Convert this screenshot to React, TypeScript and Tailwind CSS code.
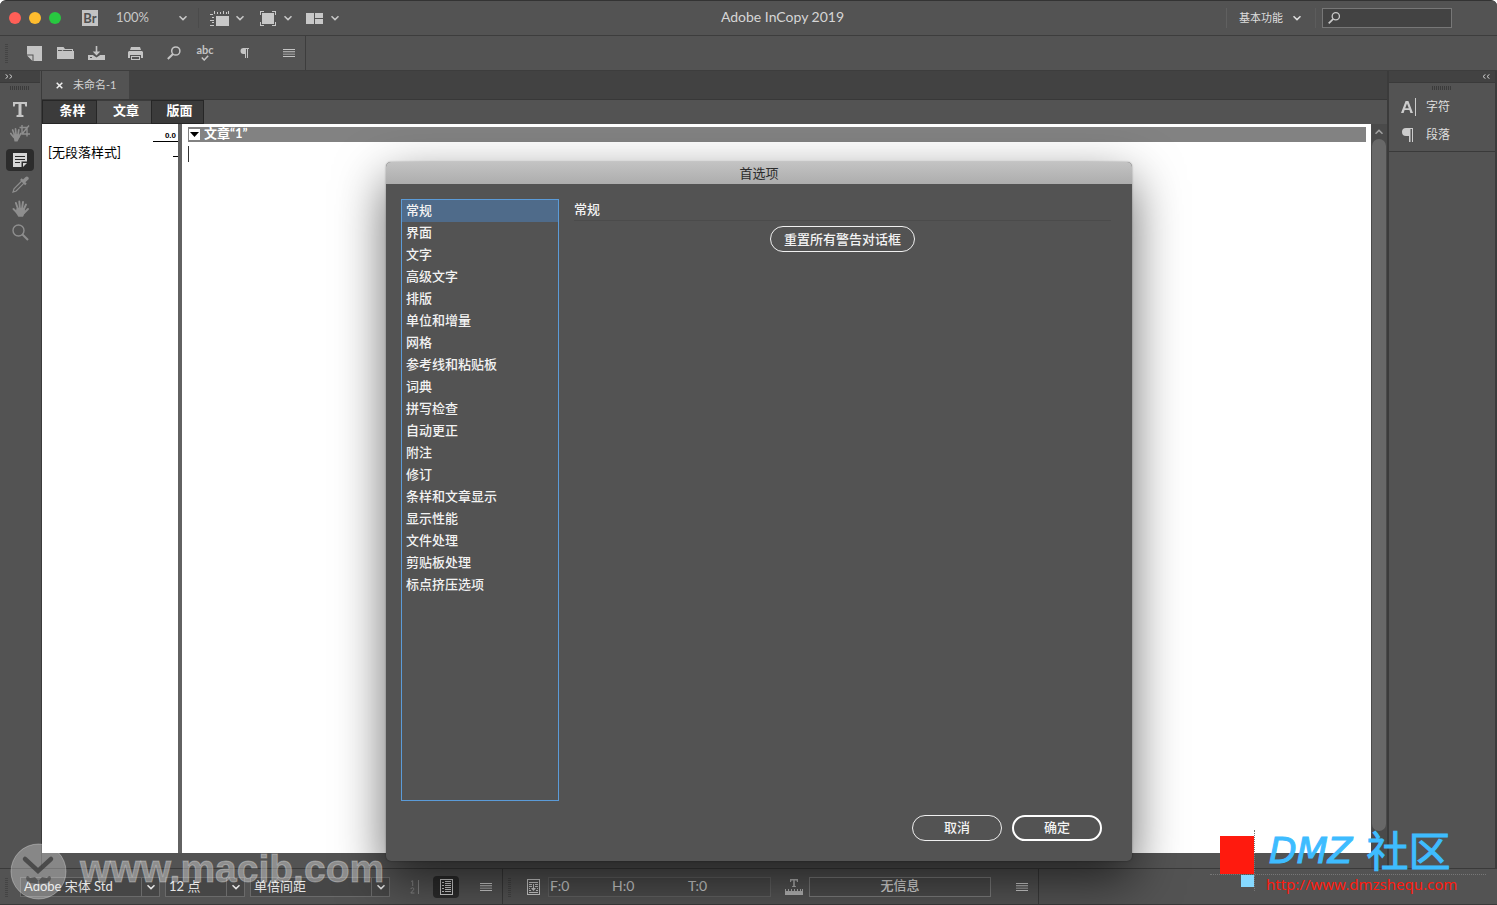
import React from "react";

const categories = [
  "常规", "界面", "文字", "高级文字", "排版", "单位和增量", "网格", "参考线和粘贴板", "词典",
  "拼写检查", "自动更正", "附注", "修订", "条样和文章显示", "显示性能", "文件处理", "剪贴板处理", "标点挤压选项",
];

function Chevron({ className = "" }: { className?: string }) {
  return (
    <svg className={`h-[8px] w-[8px] shrink-0 ${className}`} viewBox="0 0 8 8" fill="none" stroke="currentColor" strokeWidth="1.5">
      <path d="M0.5 2.2 4 5.6 7.5 2.2" />
    </svg>
  );
}

function Lines() {
  return (
    <svg className="h-[8px] w-[12px]" viewBox="0 0 12 8" fill="currentColor">
      <path d="M0 0h12v.9H0zM0 2.330h12v.9H0zM0 4.670h12v.9H0zM0 7h12v.9H0z" />
    </svg>
  );
}

function SearchGlyph() {
  return (
    <svg className="h-[14px] w-[14px]" viewBox="0 0 14 14" fill="none" stroke="currentColor" strokeWidth="1.5">
      <circle cx="8.8" cy="5" r="4.1" />
      <path d="M6 8 .8 13" strokeWidth="2" />
    </svg>
  );
}

function VGrip() {
  return <span className="h-5 w-[3px] shrink-0 bg-[repeating-linear-gradient(0deg,#444444_0_1px,transparent_1px_2px)]" />;
}

function HGrip() {
  return <span className="h-[4px] w-5 shrink-0 bg-[repeating-linear-gradient(90deg,#3b3b3b_0_1px,transparent_1px_2px)]" />;
}

function IconButton({ label, className = "", children }: { label: string; className?: string; children: React.ReactNode }) {
  return (
    <button type="button" aria-label={label} className={`flex shrink-0 items-center justify-center ${className}`}>
      {children}
    </button>
  );
}

function TitleBar() {
  return (
    <header className="flex h-[35px] items-center border-b border-[#3d3d3d] bg-[#535353] text-[#c8c8c8]">
      <div className="flex w-[82px] shrink-0 items-center gap-2 pl-[9px]">
        <button type="button" aria-label="关闭" className="h-3 w-3 rounded-full bg-[#ff5f57]" />
        <button type="button" aria-label="最小化" className="h-3 w-3 rounded-full bg-[#febc2e]" />
        <button type="button" aria-label="缩放" className="h-3 w-3 rounded-full bg-[#28c840]" />
      </div>
      <IconButton label="Bridge" className="h-4 w-4 bg-[#c3c3c3] text-[13px] leading-4 font-bold text-[#505050]">Br</IconButton>
      <button type="button" className="ml-[18px] flex w-[71px] items-center justify-between text-[13px]">
        100%
        <Chevron />
      </button>
      <span className="mx-[11px] h-5 w-px bg-[#4b4b4b]" />
      <IconButton label="视图选项" className="gap-[7px]">
        <svg className="h-[15px] w-[19px]" viewBox="0 0 19 15" fill="currentColor">
          <path d="M6 5h13v10H6zM4 0h1v3H4zM7 1h1v2H7zM10 1h1v2h-1zM13 0h1v3h-1zM16 1h1v2h-1zM18 0h1v3h-1zM0 3h3v1H0zM2 6h2v1H2zM0 9h4v1H0zM2 11h2v1H2zM0 14h4v1H0z" />
        </svg>
        <Chevron />
      </IconButton>
      <IconButton label="屏幕模式" className="ml-4 gap-2">
        <svg className="h-[15px] w-[16px]" viewBox="0 0 16 15" fill="currentColor">
          <path d="M2 2h12v11H2zM0 0h4v1H1v3H0zM12 0h4v4h-1V1h-3zM0 11h1v3h3v1H0zM15 11h1v4h-4v-1h3z" />
        </svg>
        <Chevron />
      </IconButton>
      <IconButton label="排列文档" className="ml-[14px] gap-2">
        <svg className="h-[11px] w-[17px]" viewBox="0 0 17 11" fill="currentColor">
          <path d="M0 0h8v11H0zM9 0h8v5H9zM9 6h8v5H9z" />
        </svg>
        <Chevron />
      </IconButton>
      <h1 className="flex-1 pb-[3px] text-center text-[14px] leading-5 text-[#d6d6d6]">Adobe InCopy 2019</h1>
      <span className="h-5 w-px bg-[#606060]" />
      <button type="button" className="ml-3 flex items-center gap-[10px] text-[11px] text-[#dedede]">
        基本功能
        <Chevron />
      </button>
      <span className="mr-[6px] ml-[14px] h-5 w-px bg-[#5c5c5c]" />
      <label className="mr-[45px] flex h-[20px] w-[130px] items-center border border-[#777777] bg-[#434343] px-[5px]">
        <SearchGlyph />
        <input aria-label="搜索" className="w-full min-w-0 bg-transparent px-1 text-[12px] outline-none" />
      </label>
    </header>
  );
}

function Toolbar() {
  return (
    <div className="flex h-[35px] border-b border-[#3d3d3d] bg-[#535353] text-[#c4c4c4]">
      <div className="flex w-[306px] shrink-0 items-center border-r border-[#3d3d3d] pl-[5px]">
        <VGrip />
        <IconButton label="新建" className="ml-[19px] w-[15px]">
          <svg className="h-[15px] w-[15px]" viewBox="0 0 15 15" fill="currentColor">
            <path d="M0 0h15v15H6.500V8.500H0zM0 9.500h5.500V15z" />
          </svg>
        </IconButton>
        <IconButton label="打开" className="ml-[15px] w-[17px]">
          <svg className="h-[12px] w-[17px]" viewBox="0 0 17 12" fill="currentColor">
            <path fillRule="evenodd" d="M0 0h6.500L8 2h8v2h1v8H0zM1 3v1h3.500l1-1zM6.500 3l-1 1H15V3z" />
          </svg>
        </IconButton>
        <IconButton label="存储" className="ml-[14px] w-[17px]">
          <svg className="h-[14px] w-[17px]" viewBox="0 0 17 14" fill="currentColor">
            <path fillRule="evenodd" d="M7.700 0h1.600v5.500h3L8.500 9.500l-3.800-4h3zM0 9h4.800l3.700 2.500L12.200 9H17v5H0zM2 11v1h2v-1z" />
          </svg>
        </IconButton>
        <IconButton label="打印" className="ml-[23px] w-[15px]">
          <svg className="h-[13px] w-[15px]" viewBox="0 0 15 13" fill="currentColor">
            <path fillRule="evenodd" d="M3 0h9l1 3H2zM1 4h13l1 1v6h-2V8H2v3H0V5zM3 9h9v4H3zM4 10v2h7v-2z" />
          </svg>
        </IconButton>
        <IconButton label="查找" className="ml-[24px] w-[14px]">
          <SearchGlyph />
        </IconButton>
        <IconButton label="拼写检查" className="ml-[15px] w-[18px] flex-col">
          <span className="h-[10px] text-[11px] leading-[9px] font-bold">abc</span>
          <svg className="h-[6px] w-[8px]" viewBox="0 0 8 6" fill="none" stroke="currentColor" strokeWidth="1.500">
            <path d="M.8 2.500 3.200 5 7.200.8" />
          </svg>
        </IconButton>
        <IconButton label="显示隐藏字符" className="ml-[26px] w-[9px]">
          <svg className="h-[10px] w-[9px]" viewBox="0 0 9 10" fill="currentColor">
            <path d="M3.500 0H9v1H8v9H7V1H6v9H5V6H3.500a3 3 0 0 1 0-6z" />
          </svg>
        </IconButton>
        <IconButton label="菜单" className="ml-[34px] w-[12px]">
          <Lines />
        </IconButton>
      </div>
    </div>
  );
}

function ToolPanel() {
  const tool = "h-6 w-7";
  return (
    <aside className="flex w-[42px] shrink-0 flex-col border-r border-[#3b3b3b] bg-[#535353] pr-px text-[#8e8e8e]">
      <div className="flex h-[12px] items-center border-b border-[#3a3a3a] bg-[#424242] pl-[5px] text-[#cfcfcf]">
        <svg className="h-[5px] w-[8px]" viewBox="0 0 8 5" fill="none" stroke="currentColor" strokeWidth="1">
          <path d="M.5.3 3 2.500.5 4.700M4.500.3 7 2.500 4.500 4.700" />
        </svg>
      </div>
      <div className="flex flex-col items-center pt-[3px]">
        <HGrip />
        <IconButton label="文字工具" className="mt-[7px] h-6 w-7 text-[#c6c6c6]">
          <svg className="h-[15px] w-[14px]" viewBox="0 0 14 15" fill="currentColor">
            <path d="M0 0h14v4.500h-1.700L11.700 2H8.500v10.800l2 .5V15h-7v-1.700l2-.5V2H2.300l-.6 2.500H0z" />
          </svg>
        </IconButton>
        <IconButton label="位置工具" className={tool}>
          <svg className="h-[18px] w-[20px]" viewBox="0 0 20 18" fill="none" stroke="currentColor">
            <path d="M3.500 13 .8 9.500M4.500 11 2.700 6M6 10.500 5.500 4.800M8 11l.8-5.200M8.800 13l2-3.500" strokeWidth="1.700" strokeLinecap="round" />
            <path d="M3 10.500 8.500 10l1.200 3L7.500 17.500h-3z" fill="currentColor" stroke="none" />
            <path d="M9.500 3.500H17v9M12 1v9h8M12 10 19 1.500" strokeWidth="1.400" />
          </svg>
        </IconButton>
        <IconButton label="附注工具" className="mt-1 mb-px h-[22px] w-7 rounded-sm bg-[#2c2c2c] text-[#d6d6d6]">
          <svg className="h-[14px] w-[14px]" viewBox="0 0 14 14" fill="currentColor">
            <path fillRule="evenodd" d="M0 0h14v8.500H8.500V14H0zM2 3v1h10V3zM2 6v1h10V6zM2 9v1h5V9zM10 10h4l-4 4z" />
          </svg>
        </IconButton>
        <IconButton label="吸管工具" className={tool}>
          <svg className="h-[17px] w-[17px]" viewBox="0 0 17 17" fill="none" stroke="currentColor">
            <path d="M9.800 5 2 12.800 1 16l3.200-1L12 7.200" strokeWidth="1.200" />
            <path d="m8 3.900 1.700-1.600 1.300 1.200L13.600.9Q15.200 0 16.300 1.300T16 3.700l-2.600 2.500 1.300 1.500-1.600 1.500z" fill="currentColor" stroke="none" />
          </svg>
        </IconButton>
        <IconButton label="抓手工具" className={tool}>
          <svg className="h-[17px] w-[17px]" viewBox="0 0 17 17" fill="none" stroke="currentColor" strokeLinecap="round">
            <path d="M5 12.500 1.500 9M6 9 3.900 3M7.900 8.500 7.300 1.500M10 8.500 11 2M11.700 9.500 14 4.500M12 13 16 9" strokeWidth="1.900" />
            <path d="M4.700 8h7.600l1 4L11 16.800H6.300L3.500 12z" fill="currentColor" stroke="none" />
          </svg>
        </IconButton>
        <IconButton label="缩放工具" className={tool}>
          <svg className="h-[17px] w-[17px]" viewBox="0 0 17 17" fill="none" stroke="currentColor">
            <circle cx="6.500" cy="6.500" r="5.500" strokeWidth="1.400" />
            <path d="m10.500 10.500 5.500 5.500" strokeWidth="2" />
          </svg>
        </IconButton>
      </div>
    </aside>
  );
}

function Document() {
  return (
    <main className="flex min-w-0 flex-1 flex-col bg-[#535353]">
      <div className="flex h-[29px] border-b border-[#383838] bg-[#424242]">
        <div className="flex w-[87px] items-center gap-[10px] bg-[#535353] pl-[14px] text-[11px] text-[#d2d2d2]">
          <button type="button" aria-label="关闭文档">
            <svg className="h-[7px] w-[7px]" viewBox="0 0 7 7" stroke="#f0f0f0" strokeWidth="1.500">
              <path d="m.7.700 5.600 5.600M6.300.7.700 6.300" />
            </svg>
          </button>
          <span>未命名-1</span>
        </div>
      </div>
      <div className="flex h-[24px] text-[13px] leading-4 font-bold text-white">
        <button type="button" className="w-[55px] border border-[#262626] bg-[#3b3b3b] pb-[5px] pl-[6px]">条样</button>
        <button type="button" className="w-[54px] border-y border-[#3b3b3b] pb-[5px] pl-[4px]">文章</button>
        <button type="button" className="w-[53px] border border-[#262626] bg-[#3b3b3b] pb-[5px] pl-[4px]">版面</button>
      </div>
      <div className="flex flex-1">
        <div className="mb-[15px] flex flex-1 bg-white">
          <div className="flex w-[136px] flex-col text-black">
            <div className="mt-[7px] w-[25px] self-end border-b border-black pr-[2px] text-right font-['Liberation_Sans',sans-serif] text-[8px] leading-[10px] font-bold">0.0</div>
            <div className="flex justify-between pl-[6px] text-[13px] leading-5">
              <span>[无段落样式]</span>
              <span className="mt-[14px] h-px w-[5px] bg-black" />
            </div>
          </div>
          <div className="w-[4px] bg-[#626262]" />
          <div className="flex-1 pt-[3px] pr-[5px] pl-[6px]">
            <div className="flex h-[15px] items-center gap-1 bg-[#828282] pl-[1px] text-[13px] leading-[15px] font-bold text-white">
              <button type="button" aria-label="折叠文章" className="flex h-[11px] w-[11px] items-center justify-center bg-white">
                <svg className="h-[5px] w-[9px]" viewBox="0 0 9 5"><path d="M0 0h9L4.500 5z" /></svg>
              </button>
              <span className="pb-[3px]">文章“1”</span>
            </div>
            <div className="mt-1 h-4 w-px bg-[#333333]" />
          </div>
        </div>
        <div className="flex w-[16px] flex-col bg-[#4a4a4a] pb-[37px] text-[#a0a0a0]">
          <div className="flex h-[15px] items-center justify-center"><Chevron className="rotate-180" /></div>
          <div className="mx-px flex-1 rounded-full bg-[#686868]" />
        </div>
      </div>
    </main>
  );
}

function SidePanel() {
  return (
    <aside className="flex w-[110px] shrink-0 flex-col border-x-2 border-[#3b3b3b] bg-[#535353] text-[12px] text-[#dedede]">
      <div className="flex h-[12px] items-center justify-end border-b border-[#3a3a3a] bg-[#424242] pr-[5px] text-[#cfcfcf]">
        <svg className="h-[5px] w-[8px]" viewBox="0 0 8 5" fill="none" stroke="currentColor">
          <path d="M3.500.3 1 2.500l2.500 2.200M7.500.3 5 2.500l2.500 2.200" />
        </svg>
      </div>
      <div className="flex flex-col border-b border-[#3a3a3a] pt-[3px] pb-[2px]">
        <span className="flex justify-center"><HGrip /></span>
        <button type="button" className="mt-[3px] flex h-7 items-center gap-[10px] pl-3">
          <svg className="h-[18px] w-[15px] text-[#cccccc]" viewBox="0 0 15 18" fill="currentColor">
            <path fillRule="evenodd" d="M4.600 3h2.800L12 15H9.400L8.400 12H3.600l-1 3H0zM6 5.600 4.200 10.300h3.600zM14 0h1v18h-1z" />
          </svg>
          字符
        </button>
        <button type="button" className="flex h-7 items-center gap-[10px] pl-3">
          <svg className="h-[14px] w-[15px] text-[#cccccc]" viewBox="0 0 15 14" fill="currentColor">
            <path d="M5 0h7v14h-1V1H9.500v13H8V8H5a4 4 0 0 1 0-8z" />
          </svg>
          段落
        </button>
      </div>
    </aside>
  );
}

function Combo({ label, value, className }: { label: string; value: string; className: string }) {
  return (
    <div className={`relative flex h-5 shrink-0 items-center border border-[#6a6a6a] bg-[#464646] ${className}`}>
      <select aria-label={label} defaultValue={value} className="h-full w-full appearance-none bg-transparent pr-5 pb-px pl-[3px] text-[13px] leading-4 text-[#e4e4e4] outline-none">
        <option>{value}</option>
      </select>
      <span className="pointer-events-none absolute inset-y-0 right-0 flex w-[18px] items-center justify-center border-l border-[#6a6a6a] text-[#e6e6e6]">
        <Chevron />
      </span>
    </div>
  );
}

function StatusBar() {
  return (
    <footer className="flex h-[37px] items-center border-y border-[#3a3a3a] bg-[#535353] text-[13px] text-[#cfcfcf]">
      <div className="flex h-full w-[503px] shrink-0 items-center border-r border-[#3a3a3a] pl-[5px]">
        <VGrip />
        <Combo label="字体" value="Adobe 宋体 Std" className="ml-3 w-[140px]" />
        <Combo label="字号" value="12 点" className="ml-[5px] w-[80px]" />
        <Combo label="行距" value="单倍间距" className="ml-[5px] w-[140px]" />
        <IconButton label="行号" className="ml-5 w-[10px] text-[#858585]">
          <svg className="h-[14px] w-[10px]" viewBox="0 0 10 14" fill="none" stroke="currentColor">
            <path d="M1 1.500 2.700.7V6M.8 9q.4-1.300 1.700-1.200 1.700.2 1.200 1.700L.8 13h3.600M8.500 0v14" />
          </svg>
        </IconButton>
        <IconButton label="显示段落样式" className="ml-[13px] h-[22px] w-[26px] rounded-sm bg-[#2c2c2c]">
          <svg className="h-[16px] w-[13px]" viewBox="0 0 13 16" fill="currentColor">
            <path fillRule="evenodd" d="M0 0h13v16H0zM1 1v14h11V1zM2 3h2v1H2zM2 6h2v1H2zM2 9h2v1H2zM2 12h2v1H2zM5 2h6v1H5zM5 4h6v1H5zM5 6h6v1H5zM5 8h6v1H5zM5 10h6v1H5zM5 12h6v1H5z" />
          </svg>
        </IconButton>
        <IconButton label="菜单" className="ml-[21px] w-3"><Lines /></IconButton>
      </div>
      <div className="flex h-full w-[536px] shrink-0 items-center border-r border-[#3a3a3a] pl-[5px]">
        <VGrip />
        <svg className="ml-4 h-[16px] w-[13px] shrink-0" viewBox="0 0 13 16" fill="currentColor">
          <path fillRule="evenodd" d="M0 0h13v16H0zM1 1v14h11V1zM2 3h9v1H2zM2 5h3v1H2zM8 5h3v1H8zM2 7h3v1H2zM8 7h3v1H8zM2 9h1v1H2zM10 9h1v1h-1zM2 11h2v1H2zM9 11h2v1H9zM2 13h9v1H2zM6 5h1v4h2l-2.500 3L4 9h2z" />
        </svg>
        <div className="ml-2 flex h-5 w-[223px] items-center border border-[#636363] bg-[#4d4d4d] pb-[2px] pl-px text-[14px]">
          <span className="w-[62px]">F:0</span>
          <span className="w-[76px]">H:0</span>
          <span>T:0</span>
        </div>
        <svg className="ml-[14px] h-[16px] w-[18px] shrink-0 text-[#b5b5b5]" viewBox="0 0 18 16" fill="currentColor">
          <path d="M5 0h8v3h-1l-.5-1.500H9.800V7l1.200.3V8H7v-.7L8.200 7V1.500H6.500L6 3H5zM0 10h1v2h2v-2h1v2h2v-2h1v2h2v-2h1v2h2v-2h1v2h2v-2h1v2h1v-2h1v6H0z" />
        </svg>
        <div className="ml-[6px] flex h-5 w-[182px] items-center justify-center border border-[#7c7c7c] bg-[#4d4d4d] pb-px font-medium text-[#dddddd]">无信息</div>
        <IconButton label="菜单" className="ml-[25px] w-3"><Lines /></IconButton>
      </div>
    </footer>
  );
}

function PreferencesDialog() {
  return (
    <section
      role="dialog"
      aria-labelledby="preferences-title"
      className="absolute top-[161px] left-[386px] flex w-[746px] flex-col overflow-hidden rounded-[5px] bg-[#535353] text-[13px] font-medium text-[#f2f2f2] shadow-[0_18px_50px_rgba(0,0,0,0.6),0_0_2px_rgba(0,0,0,0.4)]"
    >
      <h2 id="preferences-title" className="h-[22px] bg-linear-to-b from-[#c3c3c3] to-[#adadad] text-center leading-[22px] font-normal text-[#2b2b2b]">首选项</h2>
      <div className="flex px-[15px] pt-[15px]">
        <ul className="h-[602px] w-[158px] border border-[#5b9bd8]">
          {categories.map((name, i) => (
            <li key={name}>
              <button type="button" className={i === 0 ? "block h-[22px] w-full bg-[#4f6b8a] pb-[2px] pl-[4px] text-left leading-5" : "block h-[22px] w-full pb-[2px] pl-[4px] text-left leading-5"}>
                {name}
              </button>
            </li>
          ))}
        </ul>
        <div className="mr-[6px] ml-[15px] flex flex-1 flex-col">
          <h3 className="h-[22px] border-b border-[#4b4b4b] leading-5">常规</h3>
          <button type="button" className="mt-[5px] h-[26px] w-[145px] self-center rounded-full border border-[#f0f0f0] leading-6">重置所有警告对话框</button>
        </div>
      </div>
      <div className="flex justify-end gap-[10px] pt-[14px] pr-[30px] pb-[20px]">
        <button type="button" className="h-[26px] w-[90px] rounded-full border border-[#f0f0f0]">取消</button>
        <button type="button" className="h-[26px] w-[90px] rounded-full border-2 border-white">确定</button>
      </div>
    </section>
  );
}

function MacibMark() {
  return (
    <div className="pointer-events-none absolute bottom-[5px] left-[10px] flex items-center gap-[13px]">
      <svg className="h-[57px] w-[57px]" viewBox="0 0 57 57">
        <circle cx="28.500" cy="28.500" r="27.500" fill="#ffffff" fillOpacity="0.3" stroke="#ffffff" strokeOpacity="0.3" />
        <path d="m15 16 13 12 13-12" fill="none" stroke="#3c3c3c" strokeOpacity="0.8" strokeWidth="4.500" strokeLinecap="round" />
        <path d="M16 35q1-4 4 0l5-1 3.500 4 3.500-4 5 1q3-4 4 0-1 6-6 5l-6.500 1-6.500-1q-5 1-6-5z" fill="#3c3c3c" fillOpacity="0.6" />
      </svg>
      <span className="pb-[6px] font-['Liberation_Sans',sans-serif] text-[39px] leading-[44px] font-bold text-white/35 [-webkit-text-stroke:1px_rgba(255,255,255,0.3)]">www.macib.com</span>
    </div>
  );
}

function DmzMark() {
  return (
    <div className="pointer-events-none absolute right-[11px] bottom-[14px] flex w-[276px] flex-col">
      <div className="flex h-[45px] border-b border-dotted border-[#777777]">
        <div className="flex w-[45px] flex-col items-end justify-end border-r border-dotted border-[#777777]">
          <span className="h-[38px] w-[34px] bg-[#ff1a0e]" />
        </div>
        <div className="flex h-[42px] items-center gap-[14px] pl-[14px] leading-10 text-[#3ebcff] [-webkit-text-stroke:1px_#3ebcff]">
          <span className="font-['DejaVu_Sans',sans-serif] text-[36px] italic">DMZ</span>
          <span className="text-[42px]">社区</span>
        </div>
      </div>
      <div className="flex">
        <div className="flex h-4 w-[45px] flex-col items-end border-r border-dotted border-[#777777]">
          <span className="h-3 w-[13px] bg-[#86d9ff]" />
        </div>
        <a href="http://www.dmzshequ.com" className="pointer-events-auto -mb-1 pl-[11px] font-['Noto_Sans',sans-serif] text-[15px] leading-[18px] text-[#ff1a0e]">http://www.dmzshequ.com</a>
      </div>
    </div>
  );
}

export default function App() {
  return (
    <div className="relative flex min-h-screen flex-col overflow-hidden rounded-t-md border-t border-[#333333] bg-[#535353] font-['Lato','Noto_Sans_CJK_SC',sans-serif]">
      <TitleBar />
      <Toolbar />
      <div className="flex flex-1">
        <ToolPanel />
        <Document />
        <SidePanel />
      </div>
      <StatusBar />
      <PreferencesDialog />
      <MacibMark />
      <DmzMark />
    </div>
  );
}
